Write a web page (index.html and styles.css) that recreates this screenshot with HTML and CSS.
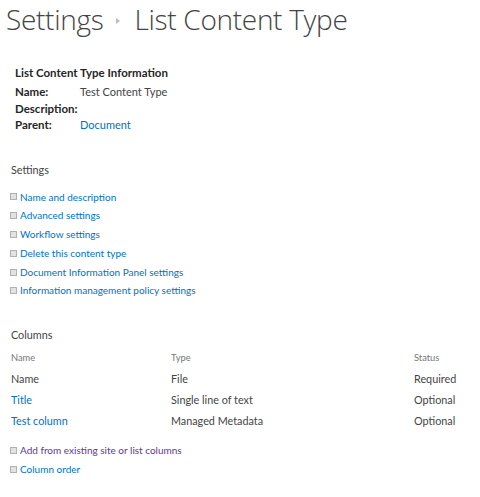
FILE: index.html
```html
<!DOCTYPE html>
<html>
<head>
<meta charset="utf-8">
<link rel="stylesheet" href="styles.css">
</head>
<body>
<div class="page">
  <h1 class="title">
    <span>Settings</span>
    <span class="crumb-arrow"></span>
    <span>List Content Type</span>
  </h1>

  <div class="info">
    <div class="info-head">List Content Type Information</div>
    <div class="info-row first"><span class="label">Name:</span><span class="value">Test Content Type</span></div>
    <div class="info-row"><span class="label">Description:</span><span class="value"></span></div>
    <div class="info-row"><span class="label">Parent:</span><a class="value link" href="#">Document</a></div>
  </div>

  <div class="section-head settings-head">Settings</div>
  <ul class="links">
    <li><a href="#">Name and description</a></li>
    <li><a href="#">Advanced settings</a></li>
    <li><a href="#">Workflow settings</a></li>
    <li><a href="#">Delete this content type</a></li>
    <li><a href="#">Document Information Panel settings</a></li>
    <li><a href="#">Information management policy settings</a></li>
  </ul>

  <div class="section-head columns-head">Columns</div>
  <div class="grid">
    <div class="gh">Name</div><div class="gh">Type</div><div class="gh">Status</div>
    <div class="gc">Name</div><div class="gc">File</div><div class="gc">Required</div>
    <div class="gc"><a href="#">Title</a></div><div class="gc">Single line of text</div><div class="gc">Optional</div>
    <div class="gc"><a href="#">Test column</a></div><div class="gc">Managed Metadata</div><div class="gc">Optional</div>
  </div>

  <ul class="links bottom-links">
    <li><a href="#" class="visited">Add from existing site or list columns</a></li>
    <li><a href="#">Column order</a></li>
  </ul>
</div>
</body>
</html>
```
FILE: styles.css
```css
* { box-sizing: border-box; }
html, body { margin: 0; padding: 0; background: #fff; }
body {
  font-family: Lato, "Open Sans", sans-serif;
  color: #444;
  font-size: 10px;
}
a { color: #0072c6; text-decoration: none; }
a.visited { color: #663399; }

.title {
  margin: 0;
  padding: 0 0 0 6px;
  font-family: "Open Sans", sans-serif;
  font-weight: 300;
  font-size: 28px;
  line-height: 38px;
  color: #444;
  display: flex;
  align-items: center;
  gap: 10px;
  letter-spacing: -0.3px;
}
.crumb-arrow {
  width: 0; height: 0;
  border-top: 3px solid transparent;
  border-bottom: 3px solid transparent;
  border-left: 4px solid #bbb;
  margin: 4px 4px 0 3px;
}

.info { padding: 26px 0 0 15px; font-size: 11.5px; }
.info-head { font-weight: 700; color: #262626; line-height: 17px; }
.info-row { display: flex; line-height: 16.5px; }
.info-row.first { margin-top: 3px; }
.label { width: 65px; font-weight: 700; color: #262626; }
.value { color: #444; font-size: 11px; }
.value.link { color: #0072c6; }

.section-head { font-size: 10.8px; color: #444; padding-left: 11px; line-height: 18px; }
.settings-head { margin-top: 27px; }
.links { list-style: none; margin: 9px 0 0 0; padding: 0 0 0 10px; }
.links li { display: flex; align-items: center; line-height: 18.8px; }
.links li::before {
  content: "";
  width: 5px; height: 5px;
  border: 1px solid #b0b0b0;
  background: #e2e2e2;
  margin-right: 3px;
  flex: none;
}
.columns-head { margin-top: 26px; }

.grid {
  display: grid;
  grid-template-columns: 160px 243px auto;
  padding-left: 11px;
  margin-top: 4px;
}
.gh { font-size: 9.3px; color: #777; line-height: 20px; }
.gc { font-size: 10.8px; line-height: 21px; color: #444; }

.bottom-links { margin-top: 10px; }
```
